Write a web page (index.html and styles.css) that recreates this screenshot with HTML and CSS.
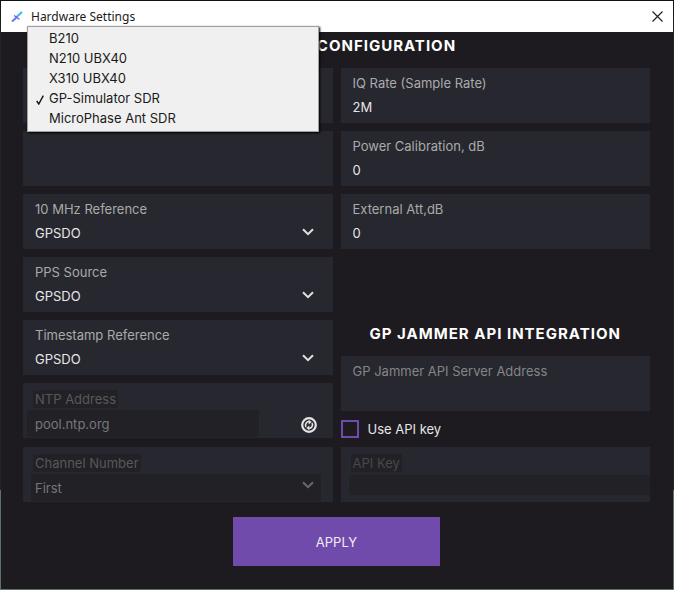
FILE: index.html
```html
<!DOCTYPE html>
<html lang="en">
<head>
    <meta charset="UTF-8">
    <meta name="viewport" content="width=device-width, initial-scale=1.0">
    <title>Hardware Settings</title>
    <link rel="stylesheet" href="styles.css">
</head>
<body>
    <div class="window">
        <header class="titlebar">
            <svg class="logo" viewBox="0 0 12 12" width="12" height="12" aria-hidden="true">
                <path d="M1 10.5 6 6" stroke="#5b7cf5" stroke-width="2"/>
                <path d="M5 6.5 11 1" stroke="#35b8ee" stroke-width="2"/>
                <path d="M3 4.5 5.5 6 8.5 8.5" fill="none" stroke="#7a5cf0" stroke-width="1.3"/>
            </svg>
            <span class="title">Hardware Settings</span>
            <button class="close" type="button" aria-label="Close">
                <svg viewBox="0 0 11 11" width="11" height="11"><path d="M.5.5l10 10M10.5.5l-10 10" stroke="#222" stroke-width="1.2"/></svg>
            </button>
        </header>

        <form class="content">
            <h1 class="heading">HARDWARE CONFIGURATION</h1>
            <div class="columns">
                <div class="column">
                    <div class="field">
                        <button class="picker" type="button" aria-haspopup="listbox" aria-expanded="true" aria-controls="deviceMenu" aria-label="Device"></button>
                        <ul class="menu" id="deviceMenu" role="listbox" aria-label="Device">
                            <li role="option">B210</li>
                            <li role="option">N210 UBX40</li>
                            <li role="option">X310 UBX40</li>
                            <li role="option" aria-selected="true">
                                <svg class="check" viewBox="0 0 8 10" width="8" height="10"><path d="M.7 6 2.8 9 7.3.7" fill="none" stroke="#111" stroke-width="1.4"/></svg>
                                GP-Simulator SDR
                            </li>
                            <li role="option">MicroPhase Ant SDR</li>
                        </ul>
                    </div>
                    <div class="field"></div>
                    <div class="field">
                        <label for="refClock">10 MHz Reference</label>
                        <select id="refClock"><option>GPSDO</option></select>
                        <svg class="chevron" viewBox="0 0 12 8" width="12" height="8"><path d="M1 1.2 6 6.2 11 1.2"/></svg>
                    </div>
                    <div class="field">
                        <label for="ppsSource">PPS Source</label>
                        <select id="ppsSource"><option>GPSDO</option></select>
                        <svg class="chevron" viewBox="0 0 12 8" width="12" height="8"><path d="M1 1.2 6 6.2 11 1.2"/></svg>
                    </div>
                    <div class="field">
                        <label for="timestampRef">Timestamp Reference</label>
                        <select id="timestampRef"><option>GPSDO</option></select>
                        <svg class="chevron" viewBox="0 0 12 8" width="12" height="8"><path d="M1 1.2 6 6.2 11 1.2"/></svg>
                    </div>
                    <div class="field disabled ntp">
                        <label for="ntpAddress">NTP Address</label>
                        <input type="text" id="ntpAddress" value="pool.ntp.org" disabled>
                        <button class="sync" type="button" aria-label="Synchronize">
                            <svg viewBox="0 0 16 16" width="16" height="16">
                                <circle cx="8" cy="8" r="6.8" fill="none" stroke="#e4e4e4" stroke-width="2.2"/>
                                <path d="M5 10A3.6 3.6 0 0 1 8.5 4.6M11 6A3.6 3.6 0 0 1 7.5 11.4" fill="none" stroke="#e4e4e4" stroke-width="1.6"/>
                                <path d="M7.6 2.8 10.8 5 7.6 7.4ZM8.4 8.6 5.2 11 8.4 13.2Z" fill="#e4e4e4"/>
                            </svg>
                        </button>
                    </div>
                    <div class="field disabled channel">
                        <label for="channel">Channel Number</label>
                        <select id="channel" disabled><option>First</option></select>
                        <svg class="chevron" viewBox="0 0 12 8" width="12" height="8"><path d="M1 1.2 6 6.2 11 1.2"/></svg>
                    </div>
                </div>

                <div class="column">
                    <div class="field">
                        <label for="iqRate">IQ Rate (Sample Rate)</label>
                        <input type="text" id="iqRate" value="2M">
                    </div>
                    <div class="field">
                        <label for="powerCal">Power Calibration, dB</label>
                        <input type="text" id="powerCal" value="0">
                    </div>
                    <div class="field">
                        <label for="externalAtt">External Att,dB</label>
                        <input type="text" id="externalAtt" value="0">
                    </div>
                    <section class="api">
                        <h2 class="heading">GP JAMMER API INTEGRATION</h2>
                        <div class="field server">
                            <label for="apiServer">GP Jammer API Server Address</label>
                            <input type="text" id="apiServer">
                        </div>
                        <label class="use-key"><input type="checkbox"> Use API key</label>
                        <div class="field disabled key">
                            <label for="apiKey">API Key</label>
                            <input type="text" id="apiKey" disabled>
                        </div>
                    </section>
                </div>
            </div>
            <button class="apply" type="button">APPLY</button>
        </form>
    </div>
</body>
</html>
```

FILE: styles.css
```css
* {
    box-sizing: border-box;
}
body {
    margin: 0;
    min-height: 100vh;
    padding: 1px;
    display: flex;
    background: linear-gradient(#111 0, #252527 6%, #252527 83%, #5f7068 83%);
    font-family: Inter, "Liberation Sans", sans-serif;
    font-size: 13px;
    line-height: 16px;
    color: #e6e6e6;
}
.window {
    flex: 1;
    background: #1d1b20;
}
.titlebar {
    height: 31px;
    padding: 0 10px;
    display: flex;
    align-items: center;
    gap: 8px;
    background: #fff;
    color: #1a1a1a;
    font-family: "Noto Sans", "Open Sans", sans-serif;
    font-size: 12px;
}
.close {
    margin-left: auto;
    padding: 0;
    border: 0;
    background: none;
    display: flex;
}
.content {
    padding: 4px 23px 23px 22px;
}
.heading {
    margin: 0 0 12px;
    font-size: 15px;
    line-height: 20px;
    font-weight: 700;
    letter-spacing: 1px;
    text-align: center;
    color: #fff;
}
.columns {
    display: flex;
    gap: 8px;
}
.column {
    flex: 1;
    display: flex;
    flex-direction: column;
    gap: 8px;
}
.field {
    position: relative;
    height: 55px;
    padding: 7px 12px 0;
    background: #27272f;
}
.field label {
    display: block;
    width: fit-content;
    color: #aaa;
}
.field input,
.field select {
    appearance: none;
    display: block;
    width: 100%;
    height: 24px;
    margin-top: 4px;
    padding: 0;
    border: 0;
    background: none;
    font: inherit;
    color: #e6e6e6;
    opacity: 1;
}
.chevron {
    position: absolute;
    right: 19px;
    top: 34px;
    fill: none;
    stroke: #e0e0e0;
    stroke-width: 2;
    pointer-events: none;
}
.picker {
    width: 100%;
    height: 40px;
    border: 0;
    background: none;
}

/* drop-down list */
.menu {
    position: absolute;
    z-index: 1;
    left: 4px;
    right: 14px;
    bottom: -9px;
    margin: 0;
    padding: 1px 0 3px;
    list-style: none;
    background: #f0f0f0;
    border: 1px solid #a0a0a0;
    box-shadow: 1px 1px 2px #000;
    color: #1a1a1a;
}
.menu li {
    position: relative;
    padding: 2px 21px;
}
.check {
    position: absolute;
    left: 8px;
    top: 7px;
}

/* disabled fields */
.disabled label {
    margin-left: -2px;
    padding: 1px 2px;
    background: #222126;
    color: #58585b;
}
.disabled input,
.disabled select {
    background: #222126;
    color: #77777a;
}
.disabled select {
    width: calc(100% + 4px);
    height: 27px;
    margin: 2px 0 0 -4px;
    padding: 0 4px;
}
.disabled .chevron {
    stroke: #69696d;
}
.ntp input {
    width: 232px;
    height: 27px;
    margin: 2px 0 0 -8px;
    padding: 0 8px;
}
.channel {
    margin-top: 1px;
}
.sync {
    position: absolute;
    right: 16px;
    top: 34px;
    padding: 0;
    border: 0;
    background: none;
    display: flex;
}
.key label {
    color: #48484b;
}
.key input {
    width: calc(100% + 16px);
    height: 20px;
    margin: 3px -4px 0;
}

.api {
    margin-top: auto;
}
.server label {
    color: #858588;
}
.use-key {
    display: flex;
    align-items: center;
    gap: 9px;
    height: 36px;
}
.use-key input {
    appearance: none;
    width: 18px;
    height: 18px;
    margin: 0;
    border: 2px solid #704bab;
}
.apply {
    display: block;
    width: 33%;
    height: 49px;
    margin: 15px auto 0;
    border: 0;
    background: #704bab;
    color: #f0ecf6;
    font: inherit;
}
```
